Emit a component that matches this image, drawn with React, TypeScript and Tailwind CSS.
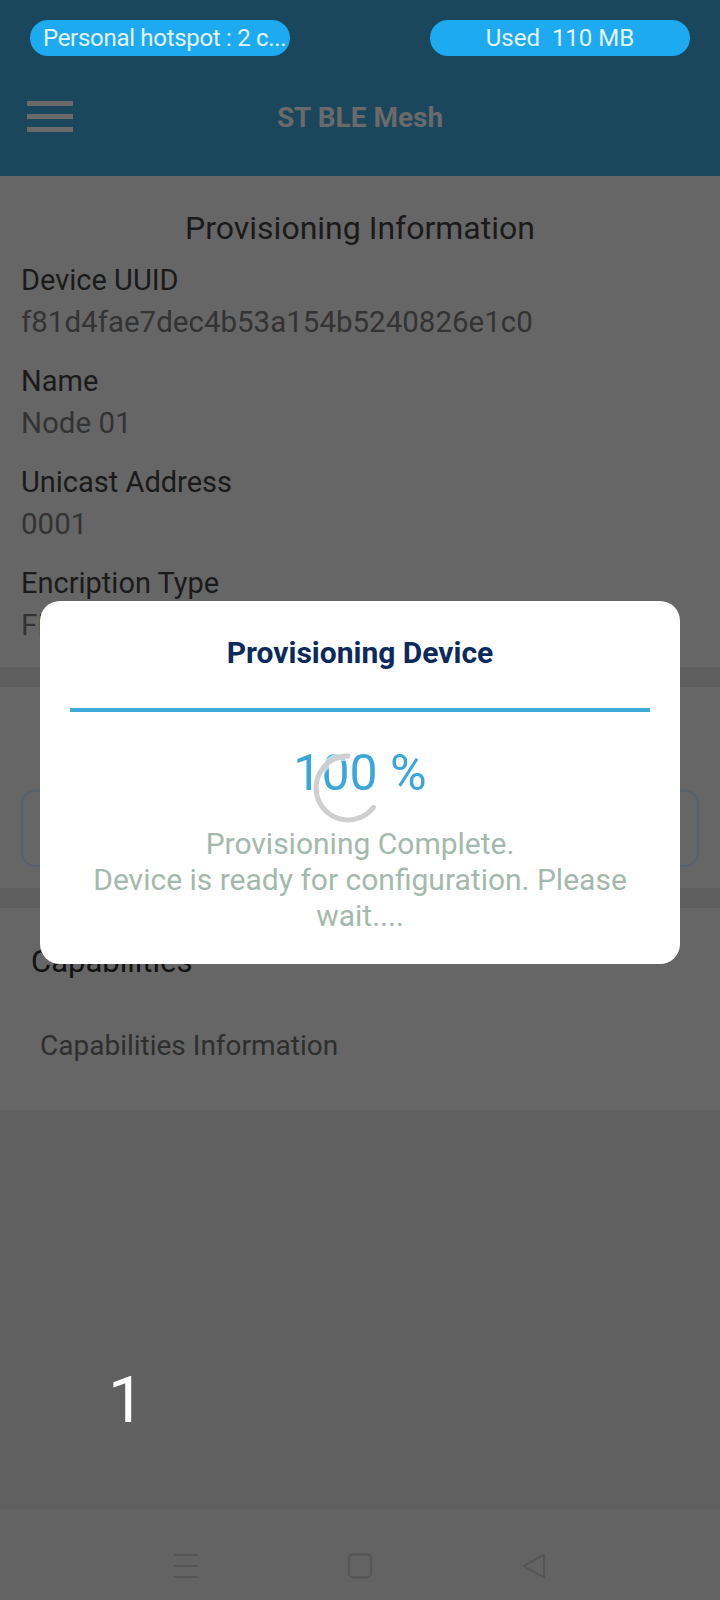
import React from "react";

const fields = [
  { label: "Device UUID", value: "f81d4fae7dec4b53a154b5240826e1c0" },
  { label: "Name", value: "Node 01" },
  { label: "Unicast Address", value: "0001" },
  { label: "Encription Type", value: "FIPS P-256 Elliptic Curve" },
];

const Spinner = () => (
  <svg width="72" height="72" viewBox="0 0 72 72" className="absolute left-[272px] top-[151px]">
    <path
      d="M 36 4 A 32 32 0 1 0 61.6 55.3"
      fill="none"
      stroke="#ffffff"
      strokeOpacity="0.6"
      strokeWidth="9"
      strokeLinecap="round"
    />
    <path
      d="M 36 4 A 32 32 0 1 0 61.6 55.3"
      fill="none"
      stroke="#cfcfcf"
      strokeWidth="5"
      strokeLinecap="round"
    />
  </svg>
);

export default function App() {
  return (
    <div className="relative flex h-[1600px] w-[720px] flex-col overflow-hidden bg-[#606060] font-[Roboto,sans-serif]">
      {/* status + toolbar */}
      <header className="flex h-[176px] flex-col bg-[#1a475b]">
        <div className="flex justify-between px-[30px] pt-[20px]">
          <div className="flex h-[36px] w-[260px] items-center overflow-hidden whitespace-nowrap rounded-full bg-[#1eaaf1] pl-[13px] text-[24px] tracking-[-0.3px] text-[#e3f4ff]">
            Personal hotspot : 2 c...
          </div>
          <div className="flex h-[36px] w-[260px] items-center justify-center whitespace-pre rounded-full bg-[#1eaaf1] text-[24px] text-[#e3f4ff]">
            Used  110 MB
          </div>
        </div>
        <div className="relative flex flex-1 items-center justify-center">
          <div className="absolute left-[27px] top-[45px] flex w-[46px] flex-col gap-[8px]">
            <span className="h-[5px] bg-[#6a6a6a]" />
            <span className="h-[5px] bg-[#6a6a6a]" />
            <span className="h-[5px] bg-[#6a6a6a]" />
          </div>
          <h1 className="mt-[4px] text-[28px] font-bold text-[#6a6a6a]">ST BLE Mesh</h1>
        </div>
      </header>

      {/* provisioning info card */}
      <section className="h-[491px] bg-[#666666] px-[21px] pt-[35px]">
        <h2 className="text-center text-[32px] leading-[35px] text-[#1a1a1a]">
          Provisioning Information
        </h2>
        <div className="mt-[13px]">
          {fields.map((f) => (
            <div key={f.label} className="mb-[17px]">
              <div className="text-[29px] leading-[42px] text-[#1a1a1a]">{f.label}</div>
              <div className="text-[29.5px] leading-[42px] text-[#333333]">{f.value}</div>
            </div>
          ))}
        </div>
      </section>
      <div className="h-[20px] bg-[#5f5f5f]" />

      {/* action card */}
      <section className="h-[201px] bg-[#666666] px-[21px] pt-[103px]">
        <div className="h-[77px] rounded-[14px] border-2 border-[#57616b]" />
      </section>
      <div className="h-[20px] bg-[#5f5f5f]" />

      {/* capabilities card */}
      <section className="h-[202px] bg-[#666666] pl-[31px] pt-[34px]">
        <div className="text-[31px] leading-[40px] text-[#121212]">Capabilities</div>
        <div className="mt-[44px] pl-[9px] text-[28px] leading-[40px] text-[#2e2e2e]">
          Capabilities Information
        </div>
      </section>

      <div className="flex-1 pl-[108px] pt-[255px]">
        <span className="text-[65px] leading-[70px] text-white">1</span>
      </div>

      {/* system nav */}
      <nav className="flex h-[90px] items-center justify-center gap-[148px] bg-[#636363] pt-[22px]">
        <svg width="26" height="26" viewBox="0 0 26 26">
          <path d="M1 2h24M1 13h24M1 24h24" stroke="#555" strokeWidth="2" />
        </svg>
        <svg width="26" height="26" viewBox="0 0 26 26">
          <rect x="2" y="1.5" width="22" height="23" rx="4" fill="none" stroke="#555" strokeWidth="2" />
        </svg>
        <svg width="26" height="28" viewBox="0 0 26 28">
          <path d="M23 2.5 L3 14 L23 25.5 Z" fill="none" stroke="#555" strokeWidth="2" strokeLinejoin="round" />
        </svg>
      </nav>

      {/* dialog */}
      <div className="absolute left-[40px] top-[601px] flex w-[640px] flex-col items-center rounded-[20px] bg-white px-[30px] pb-[30px] pt-[34px]">
        <h3 className="text-[30px] font-bold leading-[36px] text-[#0c2a5c]">Provisioning Device</h3>
        <div className="mt-[37px] h-[4px] w-full bg-[#3ea8d9]" />
        <div className="mt-[31px] text-[50px] leading-[60px] text-[#3aa6db]">100 %</div>
        <div className="mt-[23px] px-[10px] text-center text-[30px] leading-[36px] text-[#a4b9ad]">
          Provisioning Complete.
          <br />
          Device is ready for configuration. Please wait....
        </div>
        <Spinner />
      </div>
    </div>
  );
}
